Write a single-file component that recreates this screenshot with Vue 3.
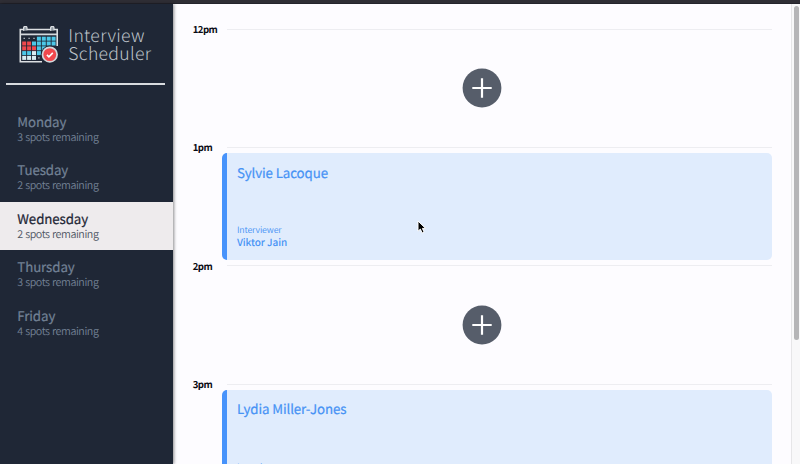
<script setup>
const days = [
  { name: 'Monday', spots: 3 },
  { name: 'Tuesday', spots: 2 },
  { name: 'Wednesday', spots: 2, selected: true },
  { name: 'Thursday', spots: 3 },
  { name: 'Friday', spots: 4 },
]
const slots = [
  { time: '12pm' },
  { time: '1pm', student: 'Sylvie Lacoque', interviewer: 'Viktor Jain' },
  { time: '2pm' },
  { time: '3pm', student: 'Lydia Miller-Jones', interviewer: 'Viktor Jain' },
]
const R = '#f0484d'
const B = '#4cc8e8'
const W = '#d9edf2'
const cells = [
  [null, null, null, B, B, B, B],
  [R, R, B, B, B, B, B],
  [R, R, R, B, B, null, null],
  [B, B, W, B, null, null, null],
  [W, W, W, null, null, null, null],
]
</script>

<template>
  <div class="window">
    <div class="topbar"></div>
    <div class="layout">
      <aside class="sidebar">
        <div class="brand">
          <svg class="logo" viewBox="0 0 41 39" width="41" height="39">
            <path d="M38.2 20V3.5H1.3v32.2H23" fill="none" stroke="#dcdfe2" stroke-width="1.6" />
            <path d="M1.3 8.3H38" stroke="#d5dade" stroke-width="1.7" />
            <path d="M4.6 4.8V2a1.7 1.7 0 0 1 3.4 0V4.2M31.6 4.8V2a1.7 1.7 0 0 1 3.4 0V4.2" fill="#929ba4" stroke="#dcdfe2" stroke-width="1.2" />
            <g v-for="(row, r) in cells" :key="r">
              <template v-for="(c, i) in row" :key="i">
                <rect v-if="c" :x="3.2 + i * 4.9" :y="10.7 + r * 4.8" width="4" height="4" :fill="c" />
              </template>
            </g>
            <path d="M4.6 12.3h1.2M9.5 12.3h1.2M14.4 12.3h1.2M19.3 31.8h1.2" stroke="#cbd2d8" stroke-width="1.2" />
            <circle cx="30.8" cy="28.6" r="9" fill="#1f2736" />
            <circle cx="30.8" cy="28.6" r="7.3" fill="#f0484d" stroke="#d3d7db" stroke-width="1.7" />
            <path d="M27.9 28.9l2 1.9 3.9-3.9" fill="none" stroke="#fff" stroke-width="1.6" />
          </svg>
          <div class="brand-name"><span>Interview</span><span>Scheduler</span></div>
        </div>
        <div class="rule"></div>
        <ul class="days">
          <li v-for="d in days" :key="d.name" :class="{ selected: d.selected }">
            <h2>{{ d.name }}</h2>
            <p>{{ d.spots }} spots remaining</p>
          </li>
        </ul>
      </aside>
      <main class="schedule">
        <section v-for="s in slots" :key="s.time" class="slot">
          <header><h4>{{ s.time }}</h4><hr /></header>
          <article v-if="s.student" class="card">
            <h3>{{ s.student }}</h3>
            <div>
              <h5>Interviewer</h5>
              <p>{{ s.interviewer }}</p>
            </div>
          </article>
          <div v-else class="empty">
            <svg width="40" height="40" viewBox="0 0 40 40">
              <circle cx="20" cy="20" r="19.4" fill="#565d6a" />
              <path d="M20 10.3v19.4M10.3 20h19.4" stroke="#fff" stroke-width="2.2" />
            </svg>
          </div>
        </section>
      </main>
      <div class="scroll"><div class="thumb"></div></div>
    </div>
    <svg class="cursor" width="10" height="15" viewBox="0 0 10 15">
      <path d="M1 1v10.2l2.4-2.1 1.7 3.9 2-.9-1.7-3.7h3.2z" fill="#000" stroke="#fff" stroke-width="1" />
    </svg>
  </div>
</template>

<style>
body { overflow: hidden; }
</style>

<style scoped>
* { box-sizing: border-box; margin: 0; padding: 0; }
.window {
  position: relative;
  display: flex;
  flex-direction: column;
  height: 464px;
  overflow: hidden;
  background: #fdfcff;
  font-family: "Noto Sans CJK JP", "Noto Sans", sans-serif;
  text-rendering: geometricPrecision;
}
.topbar { flex: none; height: 4px; background: #2f2e35; border-bottom: 1px solid #24242c; }
.layout { display: flex; flex: 1; min-height: 0; }
.sidebar {
  flex: none;
  width: 173.3px;
  background: #1f2736;
  box-shadow: 1px 0 3px rgba(0, 0, 0, 0.45);
}
.brand { display: flex; height: 79px; padding: 22px 0 0 19px; }
.logo { flex: none; }
.brand-name {
  display: flex;
  flex-direction: column;
  margin-left: 8.3px;
  padding-top: 0.5px;
  color: #bcc2c9;
  font-size: 17.6px;
  font-weight: 300;
  line-height: 18px;
  letter-spacing: 0.3px;
}
.rule { height: 2px; margin: 0 8px 0 6px; background: #d8dbdf; }
.days { padding-top: 19.5px; list-style: none; }
.days li { height: 48.65px; padding: 8px 0 0 17.3px; color: #728195; }
.days h2 { font-size: 13.3px; font-weight: 400; line-height: 17px; letter-spacing: -0.1px; -webkit-text-stroke: 0.2px currentColor; }
.days p { font-size: 10.7px; font-weight: 350; line-height: 15px; letter-spacing: -0.43px; word-spacing: 0.5px; color: #738195; }
.days .selected { background: #eeebed; color: #1f2736; }
.days .selected p { color: #4e5663; }
.schedule { flex: 1; min-width: 0; padding: 20px 19.5px 0 19.5px; overflow: hidden; }
.slot { height: 118.4px; }
.slot header { display: flex; align-items: center; height: 10px; }
.slot h4 { flex: none; width: 34.7px; font-size: 9.6px; font-weight: 700; line-height: 10px; letter-spacing: -0.6px; color: #080a12; }
.slot hr { flex: 1; height: 1px; border: 0; background: #ededf1; }
.card {
  display: flex;
  flex-direction: column;
  justify-content: space-between;
  height: 107.4px;
  margin: 0.4px 0 0 29.3px;
  padding: 8.8px 10px 12.4px 9.8px;
  border-left: 5px solid #4793fb;
  border-radius: 5px;
  background: #e0ecfd;
  color: #4793f5;
}
.card h3 { font-size: 13.3px; font-weight: 400; line-height: 21px; letter-spacing: -0.1px; -webkit-text-stroke: 0.2px currentColor; }
.card h5 { font-size: 8.8px; font-weight: 350; line-height: 12px; letter-spacing: -0.15px; }
.card p { font-size: 10px; font-weight: 500; line-height: 12px; letter-spacing: -0.05px; }
.empty { display: flex; align-items: center; justify-content: center; height: 108.4px; }
.scroll { flex: none; width: 9px; padding: 2px 1px 0 2px; border-left: 1px solid #e6e6e8; background: #f8f8f9; }
.thumb { width: 5px; height: 334px; border-radius: 3px; background: #b5b5b7; }
.cursor { position: absolute; left: 417px; top: 220px; }
</style>
